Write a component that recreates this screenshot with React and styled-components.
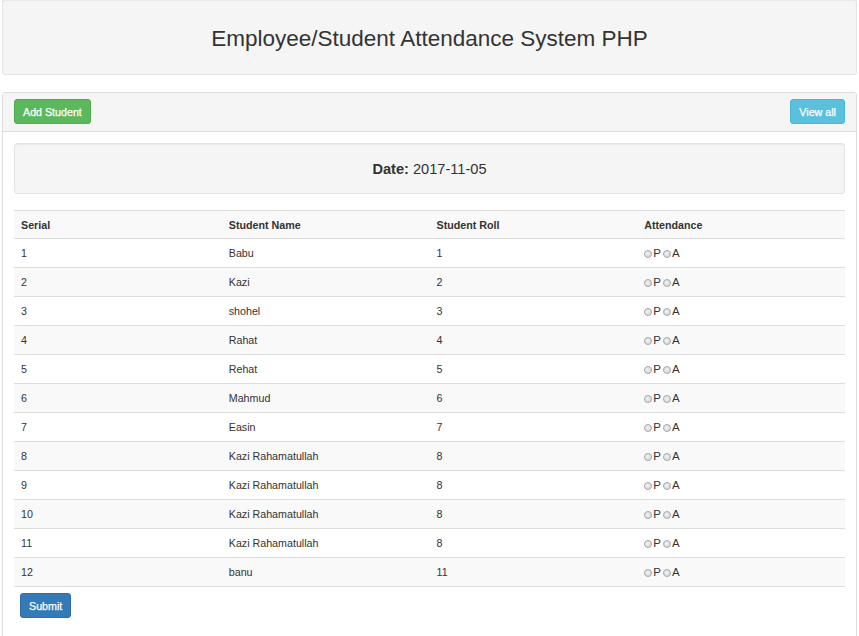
import React from 'react';
import styled, { createGlobalStyle } from 'styled-components';

const GlobalStyle = createGlobalStyle`
  html, body {
    margin: 0;
    padding: 0;
    background: #ffffff;
  }
  body {
    font-family: "Liberation Sans", Arial, sans-serif;
    font-size: 10.7px;
    color: #333333;
  }
  * {
    box-sizing: border-box;
  }
`;

const Page = styled.div`
  padding: 0 2px;
`;

const Well = styled.div`
  background-color: #f5f5f5;
  border: 1px solid #e3e3e3;
  border-radius: 3px;
  box-shadow: inset 0 1px 1px rgba(0, 0, 0, 0.05);
  text-align: center;
`;

const HeaderWell = styled(Well)`
  height: 76px;
  margin-top: -1px;
  display: flex;
  align-items: center;
  justify-content: center;
  padding-top: 4px;
`;

const Title = styled.h2`
  margin: 0;
  font-weight: 400;
  font-size: 22.5px;
  color: #333333;
`;

const Panel = styled.div`
  margin-top: 17px;
  border: 1px solid #dddddd;
  border-radius: 3px;
  min-height: 560px;
`;

const PanelHeading = styled.div`
  display: flex;
  justify-content: space-between;
  align-items: center;
  padding: 6px 11px 7px;
  background-color: #f5f5f5;
  border-bottom: 1px solid #dddddd;
`;

const Button = styled.button`
  font-family: "Liberation Sans", Arial, sans-serif;
  font-size: 10.7px;
  font-weight: 400;
  -webkit-text-stroke: 0.25px #ffffff;
  color: #ffffff;
  height: 25px;
  padding: 0 8px;
  border-radius: 3px;
  border: 1px solid ${(p) => p.$border};
  background-color: ${(p) => p.$bg};
  cursor: pointer;
`;

const PanelBody = styled.div`
  padding: 11px 11px 12px;
`;

const DateWell = styled(Well)`
  height: 51px;
  display: flex;
  align-items: center;
  justify-content: center;
  font-size: 14.6px;
  margin-bottom: 16px;
`;

const Table = styled.table`
  width: 100%;
  border-collapse: collapse;
  table-layout: fixed;
  border-bottom: 1px solid #dddddd;
`;

const Row = styled.tr`
  background-color: ${(p) => (p.$striped ? '#f9f9f9' : '#ffffff')};
`;

const Cell = styled.td`
  border-top: 1px solid #dddddd;
  padding: ${(p) => (p.$head ? '6px 7px 5px' : '6px 7px')};
  height: ${(p) => (p.$head ? '28px' : '29px')};
  line-height: 16px;
  font-weight: ${(p) => (p.$head ? 700 : 400)};
  text-align: left;
  vertical-align: middle;
`;

const Radio = styled.input.attrs({ type: 'radio' })`
  appearance: none;
  width: 8px;
  height: 8px;
  margin: 0 1px 0 0;
  border: 1px solid #a8a8a8;
  border-radius: 50%;
  background: radial-gradient(circle at 40% 40%, #f0f0f0, #d4d4d4);
  vertical-align: -1px;
`;

const Choice = styled.label`
  margin-right: 2px;
  font-size: 11.5px;
`;

const SubmitRow = styled.div`
  padding: 6px 6px 0;
`;

const students = [
  [1, 'Babu', 1],
  [2, 'Kazi', 2],
  [3, 'shohel', 3],
  [4, 'Rahat', 4],
  [5, 'Rehat', 5],
  [6, 'Mahmud', 6],
  [7, 'Easin', 7],
  [8, 'Kazi Rahamatullah', 8],
  [9, 'Kazi Rahamatullah', 8],
  [10, 'Kazi Rahamatullah', 8],
  [11, 'Kazi Rahamatullah', 8],
  [12, 'banu', 11],
];

const App = () => (
  <Page>
    <GlobalStyle />
    <HeaderWell>
      <Title>Employee/Student Attendance System PHP</Title>
    </HeaderWell>
    <Panel>
      <PanelHeading>
        <Button $bg="#5cb85c" $border="#4cae4c">Add Student</Button>
        <Button $bg="#5bc0de" $border="#46b8da">View all</Button>
      </PanelHeading>
      <PanelBody>
        <DateWell>
          <span><strong>Date:</strong> 2017-11-05</span>
        </DateWell>
        <form>
          <Table>
            <tbody>
              <Row $striped>
                <Cell as="th" $head>Serial</Cell>
                <Cell as="th" $head>Student Name</Cell>
                <Cell as="th" $head>Student Roll</Cell>
                <Cell as="th" $head>Attendance</Cell>
              </Row>
              {students.map(([serial, name, roll], i) => (
                <Row key={serial} $striped={i % 2 === 1}>
                  <Cell>{serial}</Cell>
                  <Cell>{name}</Cell>
                  <Cell>{roll}</Cell>
                  <Cell>
                    <Choice>
                      <Radio name={`att-${serial}`} value="present" />P
                    </Choice>
                    <Choice>
                      <Radio name={`att-${serial}`} value="absent" />A
                    </Choice>
                  </Cell>
                </Row>
              ))}
            </tbody>
          </Table>
          <SubmitRow>
            <Button type="button" $bg="#337ab7" $border="#2e6da4">Submit</Button>
          </SubmitRow>
        </form>
      </PanelBody>
    </Panel>
  </Page>
);

export default App;
